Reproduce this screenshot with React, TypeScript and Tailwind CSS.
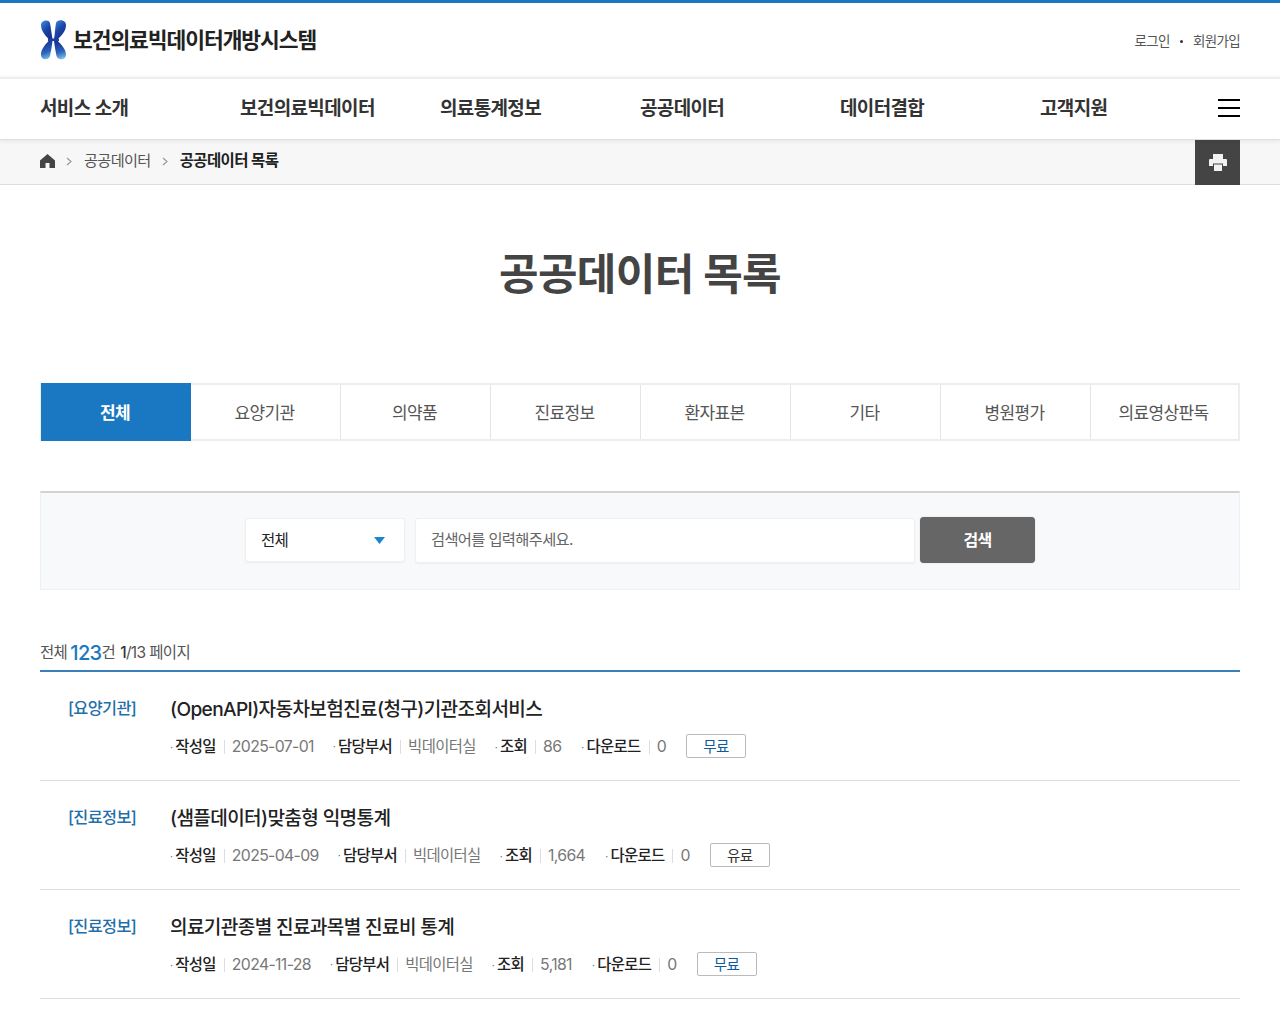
const font = "[font-family:Inter,'Noto_Sans_CJK_KR',sans-serif]";

const navItems = ["서비스 소개", "보건의료빅데이터", "의료통계정보", "공공데이터", "데이터결합", "고객지원"];
const tabs = ["전체", "요양기관", "의약품", "진료정보", "환자표본", "기타", "병원평가", "의료영상판독"];

const rows = [
  { cat: "[요양기관]", title: "(OpenAPI)자동차보험진료(청구)기관조회서비스", date: "2025-07-01", views: "86", downloads: "0", price: "무료" },
  { cat: "[진료정보]", title: "(샘플데이터)맞춤형 익명통계", date: "2025-04-09", views: "1,664", downloads: "0", price: "유료" },
  { cat: "[진료정보]", title: "의료기관종별 진료과목별 진료비 통계", date: "2024-11-28", views: "5,181", downloads: "0", price: "무료" },
];

function Logo() {
  return (
    <svg width="27" height="40" viewBox="0 0 27 40" className="shrink-0">
      <defs>
        <linearGradient id="lg1" x1="0" y1="0" x2="0.6" y2="1">
          <stop offset="0" stopColor="#3f8fe0" />
          <stop offset="0.55" stopColor="#1c45a8" />
          <stop offset="1" stopColor="#16308c" />
        </linearGradient>
        <linearGradient id="lg2" x1="0.4" y1="0" x2="0.6" y2="1">
          <stop offset="0" stopColor="#16308c" />
          <stop offset="0.6" stopColor="#2a62bc" />
          <stop offset="1" stopColor="#7cc0ec" />
        </linearGradient>
      </defs>
      <path d="M1 5 C1 0 9 -1 10 3 C11 8 11.500 14 12.500 19 L9 19.500 C5 15 1 11 1 5Z" fill="url(#lg1)" />
      <path d="M26 5 C26 -1 17 -1 16 3 C15 8 15 14 14 19 L17.500 19.500 C22 15 26 11 26 5Z" fill="url(#lg1)" />
      <path d="M9 20.500 L12.500 21 C12 26 11 31 10 36 C8.500 41 1 40 1 35 C1 29 5 25 9 20.500Z" fill="url(#lg2)" />
      <path d="M17.500 20.500 L14 21 C14.500 26 15.500 31 16.500 36 C18 41 26 40 26 35 C26 29 21.500 25 17.500 20.500Z" fill="url(#lg2)" />
      <rect x="8" y="18.500" width="11" height="2.500" fill="#1c3f9e" />
    </svg>
  );
}

function Meta({ label, value, gap, valueClass = "text-[15.800px]" }: { label: string; value: string; gap: string; valueClass?: string }) {
  return (
    <span className={`flex items-center ${gap}`}>
      <span className="mr-[3px] text-[10px] text-[#1a78c2]">·</span>
      <span className="font-medium text-[#222]">{label}</span>
      <span className="mr-[7px] ml-[8px] h-[14px] w-px bg-[#ddd]" />
      <span className={`${valueClass} text-[#777]`}>{value}</span>
    </span>
  );
}

export default function App() {
  return (
    <div className={`${font} min-h-[1024px] bg-white tracking-[-0.04em] text-[#222]`}>
      <div className="h-[3px] bg-[#1a78c2]" />
      <header className="flex h-[74px] items-center justify-between px-10">
        <div className="flex items-center gap-[6px]">
          <Logo />
          <span className="text-[21.500px] font-bold tracking-[-0.05em] text-[#222]">보건의료빅데이터개방시스템</span>
        </div>
        <div className="flex items-center gap-[10px] pt-[2px] text-[13.500px] text-[#555]">
          <span>로그인</span>
          <span className="h-[3px] w-[3px] rounded-full bg-[#333]" />
          <span>회원가입</span>
        </div>
      </header>
      <nav className="relative flex h-[63px] items-center border-t-2 border-b border-t-[#eee] border-b-[#ddd] px-10 shadow-[0_1px_5px_rgba(0,0,0,0.08)]">
        {navItems.map((n) => (
          <span key={n} className="w-[200px] shrink-0 text-[19px] font-semibold text-[#333] last-of-type:w-[178px]">
            {n}
          </span>
        ))}
        <div className="-mt-[2px] flex w-[22px] shrink-0 flex-col gap-[6px]">
          <div className="h-[2px] bg-black" />
          <div className="h-[2px] bg-black" />
          <div className="h-[2px] bg-black" />
        </div>
      </nav>
      <div className="flex h-[45px] items-center border-b border-[#ddd] bg-[#f7f7f7] pr-10 pb-[2px] pl-10 text-[15.200px]">
        <svg width="15" height="14" viewBox="0 0 15 14" fill="#444">
          <path d="M7.500 0 L15 6.500 V14 H9.500 V9 H5.500 V14 H0 V6.500Z" />
        </svg>
        <span className="mx-[11px]">
          <svg width="7" height="9" viewBox="0 0 7 9" fill="none" stroke="#999" strokeWidth="1.2">
            <path d="M1 1l4 3.500L1 8" />
          </svg>
        </span>
        <span className="text-[#555]">공공데이터</span>
        <span className="mx-[11px]">
          <svg width="7" height="9" viewBox="0 0 7 9" fill="none" stroke="#999" strokeWidth="1.2">
            <path d="M1 1l4 3.500L1 8" />
          </svg>
        </span>
        <span className="text-[15.500px] font-semibold text-[#222]">공공데이터 목록</span>
        <span className="-mb-[2px] ml-auto flex h-[45px] w-[45px] items-center justify-center bg-[#444]">
          <svg width="18" height="17" viewBox="0 0 18 17" fill="#f2f2f2">
            <path d="M4 0h10v5H4z" />
            <path d="M1 5h16a1 1 0 0 1 1 1v6h-4V9.500H4V12H0V6a1 1 0 0 1 1-1z" />
            <path d="M5 10.500h8V17H5z" />
          </svg>
        </span>
      </div>

      <main className="px-10">
        <h1 className="mt-[56px] text-center text-[43px] leading-[66px] font-bold text-[#444]">공공데이터 목록</h1>

        <div className="mt-[76px] flex h-[58px] border-y-2 border-l-1 border-[#eee]">
          {tabs.map((t, i) => (
            <div
              key={t}
              className={
                i === 0
                  ? "-my-[2px] flex w-[150px] shrink-0 items-center justify-center bg-[#1a78c2] pt-[3px] pr-[2px] text-[17px] font-bold text-white"
                  : "flex w-[150px] shrink-0 items-center justify-center border-r border-[#e5e5e5] pt-[3px] pr-[2px] text-[17px] text-[#555] last:w-[149px] last:border-r-2 last:border-[#eee]"
              }
            >
              {t}
            </div>
          ))}
        </div>

        <div className="mt-[50px] flex h-[99px] items-center justify-center gap-[10px] border border-t-2 border-[#edf0f2] border-t-[#d2d2d2] bg-[#f7f9fa] pb-[2px]">
          <div className="flex h-[44px] w-[160px] items-center justify-between rounded-[3px] border border-[#eef0f2] bg-white pt-[1px] pr-[19px] pl-[15px] text-[15.500px] text-[#222] shadow-[0_1px_2px_rgba(0,0,0,0.05)]">
            <span>전체</span>
            <svg width="11" height="7" viewBox="0 0 11 7">
              <path d="M0 0h11L5.500 7z" fill="#1a86d0" />
            </svg>
          </div>
          <div className="flex h-[45px] w-[500px] items-center rounded-[3px] border border-[#eef0f2] bg-white pt-[1px] pl-[15px] text-[15.300px] text-[#666] shadow-[0_1px_2px_rgba(0,0,0,0.05)]">
            검색어를 입력해주세요.
          </div>
          <div className="-ml-[5px] flex h-[46px] w-[115px] items-center justify-center rounded-[4px] bg-[#666] text-[16px] font-bold text-white shadow-[0_0_1px_rgba(0,0,0,0.4)]">
            검색
          </div>
        </div>

        <div className="mt-[43px] flex h-[39px] items-center border-b-2 border-[#3b7fb8] pt-[3px] text-[15.500px] text-[#555]">
          <span>전체</span>
          <span className="ml-[3px] text-[20px] font-medium text-[#1a78c2]">123</span>
          <span>건</span>
          <span className="ml-[5px] font-medium text-[#333]">1</span>
          <span>/13 페이지</span>
        </div>

        {rows.map((r) => (
          <div key={r.title} className="flex h-[109px] border-b border-[#ddd]">
            <div className="w-[130px] pt-[24px] pl-[28px] text-[16.300px] leading-[24px] font-medium text-[#1f6fa8]">{r.cat}</div>
            <div className="pt-[24px]">
              <div className="text-[19.100px] leading-[26px] font-medium text-[#222]">{r.title}</div>
              <div className="mt-[13px] flex h-[24px] items-center text-[15.400px]">
                <Meta label="작성일" value={r.date} gap="mr-[19px]" />
                <Meta label="담당부서" value="빅데이터실" gap="mr-[19px]" valueClass="text-[15.400px]" />
                <Meta label="조회" value={r.views} gap="mr-[20px]" />
                <Meta label="다운로드" value={r.downloads} gap="mr-[20px]" />
                <span
                  className={
                    r.price === "무료"
                      ? "-mt-[2px] flex h-[24px] w-[60px] items-center justify-center rounded-[2px] border border-[#bbb] pt-[1px] text-[14.500px] text-[#0f5a9a]"
                      : "-mt-[2px] flex h-[24px] w-[60px] items-center justify-center rounded-[2px] border border-[#bbb] pt-[1px] text-[14.500px] text-[#333]"
                  }
                >
                  {r.price}
                </span>
              </div>
            </div>
          </div>
        ))}
      </main>
    </div>
  );
}
